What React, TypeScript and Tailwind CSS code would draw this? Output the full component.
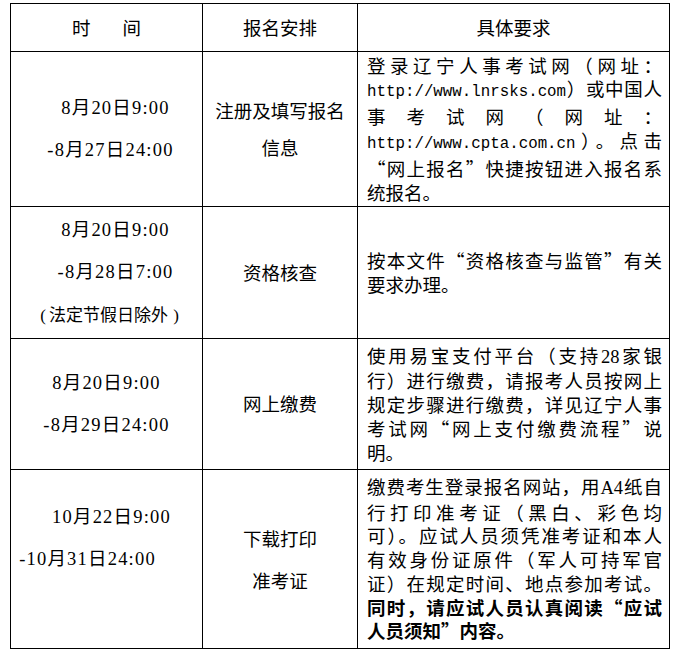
import React from 'react';

const serif = "font-['Liberation_Serif','Noto_Sans_CJK_SC',serif]";
const cjk = "font-['Noto_Sans_CJK_SC',sans-serif]";
const mono = "font-['Liberation_Mono',monospace] text-[15.8px]";
const num = "font-['Liberation_Serif',serif]";

const Cell: React.FC<{ className?: string; children: React.ReactNode }> = ({ className = '', children }) => (
  <div className={`bg-white flex flex-col justify-center ${className}`}>{children}</div>
);

// one justified line of the requirement column
const J: React.FC<{ last?: boolean; bold?: boolean; children: React.ReactNode }> = ({ last, bold, children }) => (
  <div
    className={`whitespace-nowrap ${last ? 'text-left' : 'text-justify [text-align-last:justify]'} ${
      bold ? 'font-bold' : ''
    }`}
  >
    {children}
  </div>
);

const App: React.FC = () => {
  return (
    <div className="w-[685px] h-[652px] bg-white pt-[3px] pl-[10px] text-black">
      <div className="grid grid-cols-[191px_154px_311px] grid-rows-[47px_154px_131px_130px_178px] gap-px p-px bg-black w-[660px]">
        {/* header */}
        <Cell className={`${cjk} text-[18.5px] items-center`}>
          <div className="flex">
            <span>时</span>
            <span className="w-[32px]" />
            <span>间</span>
          </div>
        </Cell>
        <Cell className={`${cjk} text-[18.5px] items-center`}>报名安排</Cell>
        <Cell className={`${cjk} text-[18.5px] items-center`}>具体要求</Cell>

        {/* row 1 */}
        <Cell className={`${serif} text-[18.5px] tracking-[1.2px] leading-[42px] text-center`}>
          <div className="pl-[18px]">8月20日9:00</div>
          <div className="pl-[8px]">-8月27日24:00</div>
        </Cell>
        <Cell className={`${cjk} text-[18.5px] leading-[37px] text-center`}>
          <div>注册及填写报名</div>
          <div>信息</div>
        </Cell>
        <Cell className={`${cjk} text-[18.5px] leading-[23.8px] pl-[9px] pr-[7px]`}>
          <J>登录辽宁人事考试网（网址：</J>
          <J><span className={mono}>http://www.lnrsks.com</span>）或中国人</J>
          <J>事考试网（网址：</J>
          <J><span className={mono}>http://www.cpta.com.cn</span>）。点击</J>
          <J>“网上报名”快捷按钮进入报名系</J>
          <J last>统报名。</J>
        </Cell>

        {/* row 2 */}
        <Cell className={`${serif} text-[18.5px] tracking-[1.2px] leading-[42px] text-center`}>
          <div className="pl-[18px]">8月20日9:00</div>
          <div className="pl-[18px]">-8月28日7:00</div>
          <div className={`pl-[8px] ${cjk} text-[17px] tracking-normal`}>
            <span className={`inline-block w-[12px] text-center ${num}`}>(</span>法定节假日除外<span className={`inline-block w-[16px] text-center ${num}`}>)</span>
          </div>
        </Cell>
        <Cell className={`${cjk} text-[18.5px] text-center`}>资格核查</Cell>
        <Cell className={`${cjk} text-[18.5px] leading-[23.8px] pl-[9px] pr-[7px]`}>
          <J>按本文件“资格核查与监管”有关</J>
          <J last>要求办理。</J>
        </Cell>

        {/* row 3 */}
        <Cell className={`${serif} text-[18.5px] tracking-[1.2px] leading-[42px] text-center`}>
          <div>8月20日9:00</div>
          <div>-8月29日24:00</div>
        </Cell>
        <Cell className={`${cjk} text-[18.5px] text-center`}>网上缴费</Cell>
        <Cell className={`${cjk} text-[18.5px] leading-[23.8px] pl-[9px] pr-[7px]`}>
          <J>使用易宝支付平台（支持<span className={num}>28</span>家银</J>
          <J>行）进行缴费，请报考人员按网上</J>
          <J>规定步骤进行缴费，详见辽宁人事</J>
          <J>考试网“网上支付缴费流程”说</J>
          <J last>明。</J>
        </Cell>

        {/* row 4 */}
        <Cell className={`${serif} text-[18.5px] tracking-[1.2px] leading-[42px] text-center`}>
          <div className="pl-[10px]">10月22日9:00</div>
          <div className="pr-[38px]">-10月31日24:00</div>
          <div>&nbsp;</div>
        </Cell>
        <Cell className={`${cjk} text-[18.5px] leading-[42px] text-center`}>
          <div>下载打印</div>
          <div>准考证</div>
        </Cell>
        <Cell className={`${cjk} text-[18.5px] leading-[23.8px] pl-[9px] pr-[7px]`}>
          <J>缴费考生登录报名网站，用<span className={num}>A4</span>纸自</J>
          <J>行打印准考证（黑白、彩色均</J>
          <J>可）。应试人员须凭准考证和本人</J>
          <J>有效身份证原件（军人可持军官</J>
          <J>证）在规定时间、地点参加考试。</J>
          <J bold>同时，请应试人员认真阅读“应试</J>
          <J bold last>人员须知”内容。</J>
        </Cell>
      </div>
    </div>
  );
};

export default App;
